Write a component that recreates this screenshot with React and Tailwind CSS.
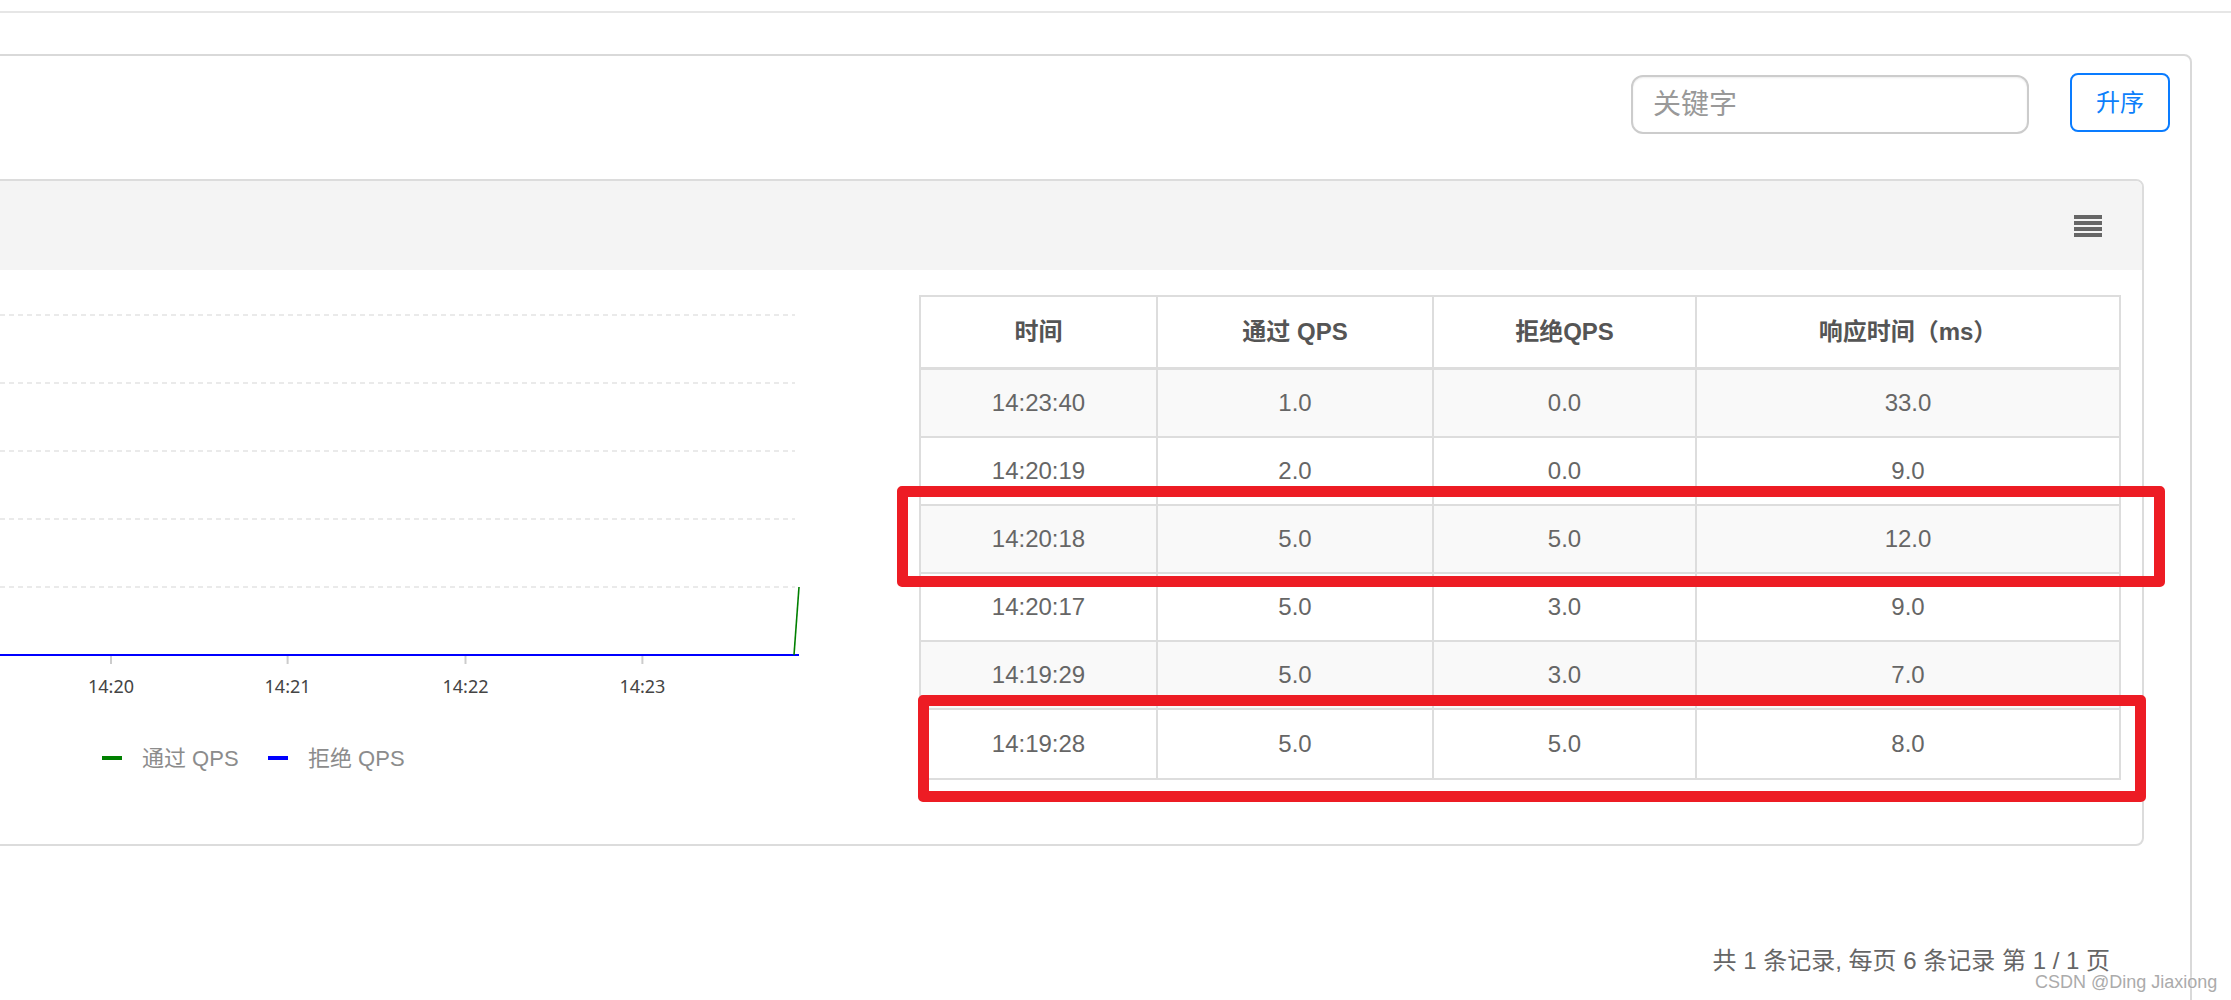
import React from "react";

const rows = [
  ["14:23:40", "1.0", "0.0", "33.0"],
  ["14:20:19", "2.0", "0.0", "9.0"],
  ["14:20:18", "5.0", "5.0", "12.0"],
  ["14:20:17", "5.0", "3.0", "9.0"],
  ["14:19:29", "5.0", "3.0", "7.0"],
  ["14:19:28", "5.0", "5.0", "8.0"],
];

const cols = "grid grid-cols-[237px_276px_263px_422px]";

// chart coords are page coords shifted: x + 18, y - 270
function Chart() {
  const grid = [45, 113, 181, 249, 317];
  const ticks = [
    { x: 129, label: "14:20" },
    { x: 305.6, label: "14:21" },
    { x: 483.5, label: "14:22" },
    { x: 660.4, label: "14:23" },
  ];
  return (
    <svg width="820" height="560" className="shrink-0">
      {grid.map((y) => (
        <line key={y} x1="0" y1={y} x2="813" y2={y} stroke="#e3e3e3" strokeWidth="1.5" strokeDasharray="5 4" />
      ))}
      {ticks.map((t) => (
        <g key={t.label}>
          <line x1={t.x} y1="386" x2={t.x} y2="394" stroke="#cccccc" strokeWidth="2" />
          <text x={t.x} y="423" textAnchor="middle" fontSize="18" fill="#444" fontFamily="'Noto Sans', 'Liberation Sans', sans-serif">
            {t.label}
          </text>
        </g>
      ))}
      <line x1="0" y1="385" x2="817" y2="385" stroke="#0000ff" strokeWidth="2" />
      <line x1="812" y1="385" x2="817" y2="317" stroke="#008000" strokeWidth="1.6" />
      <rect x="120" y="486" width="20" height="4" fill="#008000" />
      <text x="160" y="496" fontSize="22" fill="#8c8c8c" fontFamily="'Liberation Sans', 'Noto Sans CJK SC', sans-serif">
        通过 QPS
      </text>
      <rect x="286" y="486" width="20" height="4" fill="#0000ff" />
      <text x="326" y="496" fontSize="22" fill="#8c8c8c" fontFamily="'Liberation Sans', 'Noto Sans CJK SC', sans-serif">
        拒绝 QPS
      </text>
    </svg>
  );
}

function StatsTable() {
  return (
    <div className="w-[1202px] mt-[25px] mr-[21px] ml-auto border-2 border-[#dddddd] text-[24px] text-center">
      <div className={`${cols} h-[73px] border-b-[3px] border-[#dddddd] font-bold text-[#555]`}>
        <div className="flex items-center justify-center border-r-2 border-[#dddddd]">时间</div>
        <div className="flex items-center justify-center border-r-2 border-[#dddddd]">通过 QPS</div>
        <div className="flex items-center justify-center border-r-2 border-[#dddddd]">拒绝QPS</div>
        <div className="flex items-center justify-center">响应时间（ms）</div>
      </div>
      {rows.map((r, i) => (
        <div
          key={r[0]}
          className={`${cols} h-[68px] text-[#666] ${i < rows.length - 1 ? "border-b-2 border-[#dddddd]" : ""} ${
            i % 2 === 0 ? "bg-[#f9f9f9]" : "bg-white"
          }`}
        >
          <div className="flex items-center justify-center border-r-2 border-[#dddddd]">{r[0]}</div>
          <div className="flex items-center justify-center border-r-2 border-[#dddddd]">{r[1]}</div>
          <div className="flex items-center justify-center border-r-2 border-[#dddddd]">{r[2]}</div>
          <div className="flex items-center justify-center">{r[3]}</div>
        </div>
      ))}
    </div>
  );
}

export default function App() {
  return (
    <div className="relative w-[2231px] h-[1000px] overflow-hidden bg-white font-['Liberation_Sans','Noto_Sans_CJK_SC',sans-serif]">
      <div className="h-[2px] mt-[11px] bg-[#e6e6e6]"></div>

      {/* main panel, left edge is cut off */}
      <div className="-ml-[40px] mt-[41px] w-[2232px] h-[960px] border-2 border-[#d9d9d9] rounded-[8px]">
        {/* toolbar */}
        <div className="flex justify-end items-start gap-[41px] pt-[19px] pr-[20px]">
          <input
            placeholder="关键字"
            className="w-[398px] h-[59px] pl-[20px] border-2 border-[#cccccc] rounded-[12px] text-[28px] text-[#555] placeholder:text-[#999] outline-none shadow-[inset_0_1px_2px_rgba(0,0,0,0.08)]"
          />
          <button className="w-[100px] h-[59px] -mt-[2px] border-2 border-[#0a7cff] rounded-[8px] text-[24px] text-[#0d7ffb] bg-white">
            升序
          </button>
        </div>

        {/* chart card */}
        <div className="ml-[18px] mr-[46px] mt-[45px] h-[667px] border-2 border-[#dcdcdc] rounded-[8px] overflow-hidden">
          <div className="h-[89px] bg-[#f4f4f4] flex items-center justify-end pr-[40px]">
            <div className="flex flex-col gap-[2px]">
              <div className="w-[28px] h-[4px] bg-[#666]"></div>
              <div className="w-[28px] h-[4px] bg-[#666]"></div>
              <div className="w-[28px] h-[4px] bg-[#666]"></div>
              <div className="w-[28px] h-[4px] bg-[#666]"></div>
            </div>
          </div>
          <div className="flex items-start">
            <Chart />
            <StatsTable />
          </div>
        </div>

        {/* pager info */}
        <div className="flex justify-end pr-[80px] mt-[101px] text-[24px] leading-[28px] text-[#666]">
          共 1 条记录, 每页 6 条记录 第 1 / 1 页
        </div>
      </div>

      {/* red annotation boxes */}
      <div className="absolute left-[897px] top-[486px] w-[1268px] h-[101px] border-[11px] border-[#ed1c24] rounded-[5px]"></div>
      <div className="absolute left-[918px] top-[695px] w-[1228px] h-[107px] border-[11px] border-[#ed1c24] rounded-[5px]"></div>

      {/* watermark */}
      <div className="absolute left-[2035px] top-[971px] text-[18px] leading-[22px] text-[#ababab] [text-shadow:0_0_2px_#fff]">
        CSDN @Ding Jiaxiong
      </div>
    </div>
  );
}
